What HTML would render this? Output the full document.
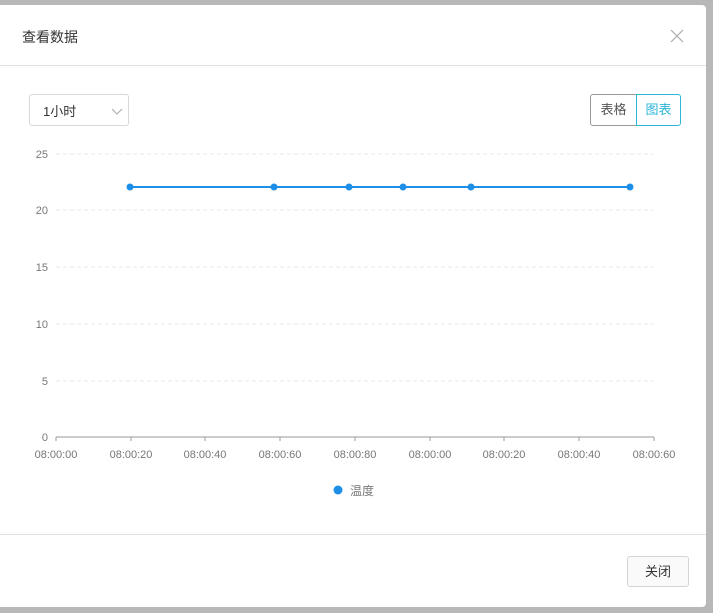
<!DOCTYPE html>
<html><head><meta charset="utf-8"><style>
body{margin:0;width:713px;height:613px;background:#b8b8b8;position:relative;overflow:hidden;font-family:"Liberation Sans","Noto Sans CJK SC",sans-serif;}
.modal{position:absolute;left:0;top:5px;width:706px;height:602px;background:#fff;border-radius:0 4px 4px 0;}
.title{position:absolute;left:22px;top:22px;font-size:14px;color:#333;}
.x{position:absolute;left:670px;top:24px;}
.hd{position:absolute;left:0;top:60px;width:706px;height:1px;background:#e2e2e2;}
.ft{position:absolute;left:0;top:529px;width:706px;height:1px;background:#e2e2e2;}
.sel{position:absolute;left:29px;top:89px;width:100px;height:32px;border:1px solid #d9d9d9;border-radius:3px;font-size:13px;color:#333;box-sizing:border-box;}
.sel span{position:absolute;left:13px;top:6px;}
.tg{position:absolute;top:89px;height:32px;box-sizing:border-box;font-size:13px;line-height:30px;text-align:center;}
.b1{left:590px;width:47px;border:1px solid #999;border-radius:3px 0 0 3px;color:#555;}
.b2{left:636px;width:45px;border:1px solid #2bb5d8;border-radius:0 3px 3px 0;color:#2bb5d8;}
.close{position:absolute;left:627px;top:551px;width:62px;height:31px;border:1px solid #d5d5d5;border-radius:3px;box-sizing:border-box;background:#fafafa;font-size:13px;color:#333;text-align:center;line-height:29px;}
</style></head><body>
<div class="modal">
<div class="title">查看数据</div>
<svg class="x" width="14" height="14"><path d="M1 1L13 13M13 1L1 13" stroke="#aaa" stroke-width="1.2"/></svg>
<div class="hd"></div>
<div class="sel"><span>1小时</span><svg style="position:absolute;left:81px;top:13px" width="12" height="8"><path d="M1 1L6 6L11 1" stroke="#aaa" fill="none"/></svg></div>
<div class="tg b1">表格</div><div class="tg b2">图表</div>
<div class="ft"></div>
<div class="close">关闭</div>
</div>
<svg style="position:absolute;left:0;top:0" width="713" height="613" font-family="Liberation Sans,sans-serif" font-size="11" fill="#777">
<g stroke="#e8e8e8" stroke-dasharray="4,3">
<line x1="56" y1="154" x2="654" y2="154"/><line x1="56" y1="210" x2="654" y2="210"/><line x1="56" y1="267" x2="654" y2="267"/><line x1="56" y1="324" x2="654" y2="324"/><line x1="56" y1="381" x2="654" y2="381"/></g>
<line x1="56" y1="437" x2="654" y2="437" stroke="#999"/>
<g stroke="#999"><line x1="56" y1="437" x2="56" y2="441"/><line x1="131" y1="437" x2="131" y2="441"/><line x1="205" y1="437" x2="205" y2="441"/><line x1="280" y1="437" x2="280" y2="441"/><line x1="355" y1="437" x2="355" y2="441"/><line x1="430" y1="437" x2="430" y2="441"/><line x1="504" y1="437" x2="504" y2="441"/><line x1="579" y1="437" x2="579" y2="441"/><line x1="654" y1="437" x2="654" y2="441"/></g>
<g text-anchor="end"><text x="48" y="158">25</text><text x="48" y="214">20</text><text x="48" y="271">15</text><text x="48" y="328">10</text><text x="48" y="385">5</text><text x="48" y="441">0</text></g>
<g text-anchor="middle"><text x="56" y="458">08:00:00</text><text x="131" y="458">08:00:20</text><text x="205" y="458">08:00:40</text><text x="280" y="458">08:00:60</text><text x="355" y="458">08:00:80</text><text x="430" y="458">08:00:00</text><text x="504" y="458">08:00:20</text><text x="579" y="458">08:00:40</text><text x="654" y="458">08:00:60</text></g>
<line x1="130" y1="187" x2="630" y2="187" stroke="#1e8fe6" stroke-width="2"/>
<g fill="#1e8fe6"><circle cx="130" cy="187" r="3.5"/><circle cx="274" cy="187" r="3.5"/><circle cx="349" cy="187" r="3.5"/><circle cx="403" cy="187" r="3.5"/><circle cx="471" cy="187" r="3.5"/><circle cx="630" cy="187" r="3.5"/><circle cx="338" cy="490" r="4.5"/></g>
<text x="350" y="495" font-family="Liberation Sans,Noto Sans CJK SC,sans-serif" font-size="12">温度</text>
</svg>
</body></html>
